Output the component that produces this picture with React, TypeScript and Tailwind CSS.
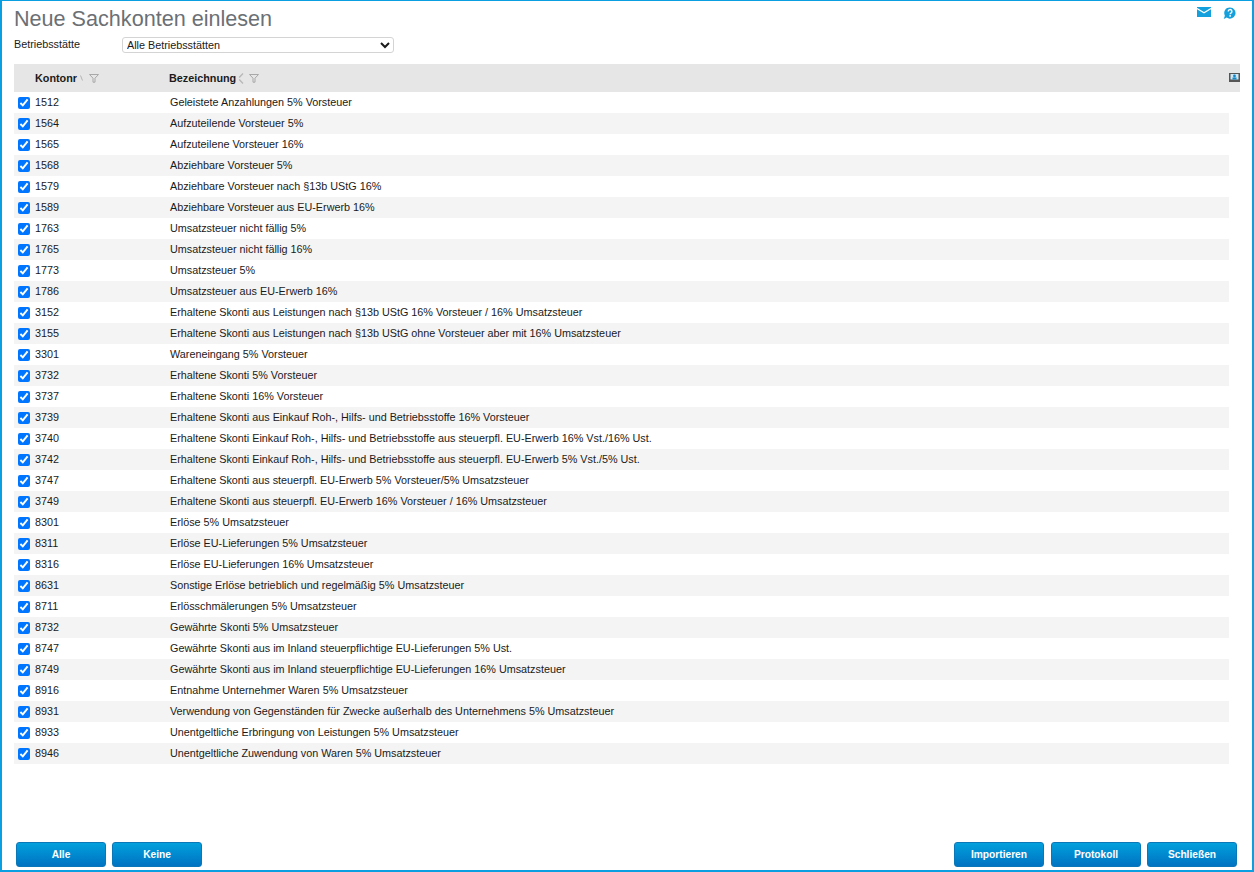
const konten: [string, string][] = [
  ["1512", "Geleistete Anzahlungen 5% Vorsteuer"],
  ["1564", "Aufzuteilende Vorsteuer 5%"],
  ["1565", "Aufzuteilene Vorsteuer 16%"],
  ["1568", "Abziehbare Vorsteuer 5%"],
  ["1579", "Abziehbare Vorsteuer nach §13b UStG 16%"],
  ["1589", "Abziehbare Vorsteuer aus EU-Erwerb 16%"],
  ["1763", "Umsatzsteuer nicht fällig 5%"],
  ["1765", "Umsatzsteuer nicht fällig 16%"],
  ["1773", "Umsatzsteuer 5%"],
  ["1786", "Umsatzsteuer aus EU-Erwerb 16%"],
  ["3152", "Erhaltene Skonti aus Leistungen nach §13b UStG 16% Vorsteuer / 16% Umsatzsteuer"],
  ["3155", "Erhaltene Skonti aus Leistungen nach §13b UStG ohne Vorsteuer aber mit 16% Umsatzsteuer"],
  ["3301", "Wareneingang 5% Vorsteuer"],
  ["3732", "Erhaltene Skonti 5% Vorsteuer"],
  ["3737", "Erhaltene Skonti 16% Vorsteuer"],
  ["3739", "Erhaltene Skonti aus Einkauf Roh-, Hilfs- und Betriebsstoffe 16% Vorsteuer"],
  ["3740", "Erhaltene Skonti Einkauf Roh-, Hilfs- und Betriebsstoffe aus steuerpfl. EU-Erwerb 16% Vst./16% Ust."],
  ["3742", "Erhaltene Skonti Einkauf Roh-, Hilfs- und Betriebsstoffe aus steuerpfl. EU-Erwerb 5% Vst./5% Ust."],
  ["3747", "Erhaltene Skonti aus steuerpfl. EU-Erwerb 5% Vorsteuer/5% Umsatzsteuer"],
  ["3749", "Erhaltene Skonti aus steuerpfl. EU-Erwerb 16% Vorsteuer / 16% Umsatzsteuer"],
  ["8301", "Erlöse 5% Umsatzsteuer"],
  ["8311", "Erlöse EU-Lieferungen 5% Umsatzsteuer"],
  ["8316", "Erlöse EU-Lieferungen 16% Umsatzsteuer"],
  ["8631", "Sonstige Erlöse betrieblich und regelmäßig 5% Umsatzsteuer"],
  ["8711", "Erlösschmälerungen 5% Umsatzsteuer"],
  ["8732", "Gewährte Skonti 5% Umsatzsteuer"],
  ["8747", "Gewährte Skonti aus im Inland steuerpflichtige EU-Lieferungen 5% Ust."],
  ["8749", "Gewährte Skonti aus im Inland steuerpflichtige EU-Lieferungen 16% Umsatzsteuer"],
  ["8916", "Entnahme Unternehmer Waren 5% Umsatzsteuer"],
  ["8931", "Verwendung von Gegenständen für Zwecke außerhalb des Unternehmens 5% Umsatzsteuer"],
  ["8933", "Unentgeltliche Erbringung von Leistungen 5% Umsatzsteuer"],
  ["8946", "Unentgeltliche Zuwendung von Waren 5% Umsatzsteuer"],
];

const FilterIcon = () => (
  <svg width="10" height="9" viewBox="0 0 10 9" fill="none" stroke="#a8a8a8" strokeWidth="1">
    <path d="M0.5 0.5h9L6 4.2v4H4v-4z" />
  </svg>
);

const Btn = ({ label }: { label: string }) => (
  <button className="w-[90px] h-[25px] rounded-[3px] border border-[#0a77b8] bg-gradient-to-b from-[#03a0dc] to-[#0273c2] text-white text-[10.2px] font-bold">
    {label}
  </button>
);

const App = () => {
  return (
    <div className="w-[1254px] h-[872px] flex flex-col border-x-2 border-b-2 border-t border-[#0a9fe0] bg-white text-[#1a1a1a] font-['Liberation_Sans',Arial,sans-serif] overflow-hidden">
      <div className="flex justify-between pl-[12px] pr-[16px] pt-[5px] h-[32px]">
        <h1 className="text-[21.6px] leading-[25px] text-[#6b7075]">Neue Sachkonten einlesen</h1>
        <div className="flex gap-[12px] pt-[0px] mt-px">
          <svg width="14" height="10" viewBox="0 0 14 10">
            <rect width="14" height="10" fill="#14a0dc" />
            <path d="M0 1.5l7 4.2L14 1.5" fill="none" stroke="#fff" strokeWidth="1.3" />
          </svg>
          <svg width="13" height="13" viewBox="0 0 14 14">
            <path d="M7.5 0.5a6 6 0 1 1-3.5 10.9L0.8 13l1.2-3.7A6 6 0 0 1 7.5 0.5z" fill="#14a0dc" />
            <path d="M5.6 4.8a2 2 0 1 1 3 1.7c-.6.4-.9.7-.9 1.4" fill="none" stroke="#fff" strokeWidth="1.5" />
            <rect x="6.8" y="8.8" width="1.8" height="1.6" fill="#fff" />
          </svg>
        </div>
      </div>

      <div className="flex items-center pl-[12px] h-[16px] mt-[4px]">
        <label className="w-[108px] text-[10.8px] -mt-[2px]">Betriebsstätte</label>
        <select className="w-[272px] h-[16px] text-[10.8px] border border-[#d4d4d4] rounded-[3px] pl-0 bg-white appearance-auto">
          <option>Alle Betriebsstätten</option>
        </select>
      </div>

      <div className="ml-[12px] mr-[12px] mt-[11px] h-[28px] bg-[#e6e6e6] flex items-center text-[10.8px] font-bold relative">
        <div className="w-[155px] pl-[21px] flex items-center">
          <span>Kontonr</span>
          <svg width="4" height="6" viewBox="0 0 4 6" className="ml-[3px] mr-[5px]" fill="none" stroke="#b4b4b4">
            <path d="M0.5 0.5l2 5" />
          </svg>
          <FilterIcon />
        </div>
        <div className="flex items-center">
          <span>Bezeichnung</span>
          <svg width="7" height="11" viewBox="0 0 7 11" className="ml-[2px] mr-[4px]" fill="none" stroke="#b8b8b8" strokeWidth="1.4">
            <path d="M5 0.5L1.2 4.5M1.2 6.5l3.8 4" />
          </svg>
          <FilterIcon />
        </div>
        <svg width="11" height="9" viewBox="0 0 11 9" className="absolute right-[0px] top-[9px]">
          <rect width="11" height="9" fill="#555" />
          <rect x="1.5" y="1" width="8" height="5.5" fill="#cfe8f5" />
          <circle cx="5.5" cy="3" r="1.4" fill="#1487c8" />
          <rect x="3.5" y="4.5" width="4" height="2" fill="#1487c8" />
        </svg>
      </div>

      <div className="ml-[12px] w-[1215px]">
        {konten.map(([nr, text], i) => (
          <div key={nr} className={`h-[21px] flex items-center text-[10.8px] ${i % 2 === 1 ? "bg-[#f4f4f4]" : "bg-white"}`}>
            <div className="w-[21px] flex items-center pl-[4px]">
              <input type="checkbox" checked readOnly className="m-0 w-[12px] h-[12px]" />
            </div>
            <div className="w-[135px]">{nr}</div>
            <div>{text}</div>
          </div>
        ))}
      </div>

      <div className="mt-auto flex justify-between pl-[14px] pr-[15px] pb-[3px]">
        <div className="flex gap-[6px]">
          <Btn label="Alle" />
          <Btn label="Keine" />
        </div>
        <div className="flex gap-[6px]">
          <div className="flex mr-[1px]">
            <Btn label="Importieren" />
          </div>
          <Btn label="Protokoll" />
          <Btn label="Schließen" />
        </div>
      </div>
    </div>
  );
};

export default App;
